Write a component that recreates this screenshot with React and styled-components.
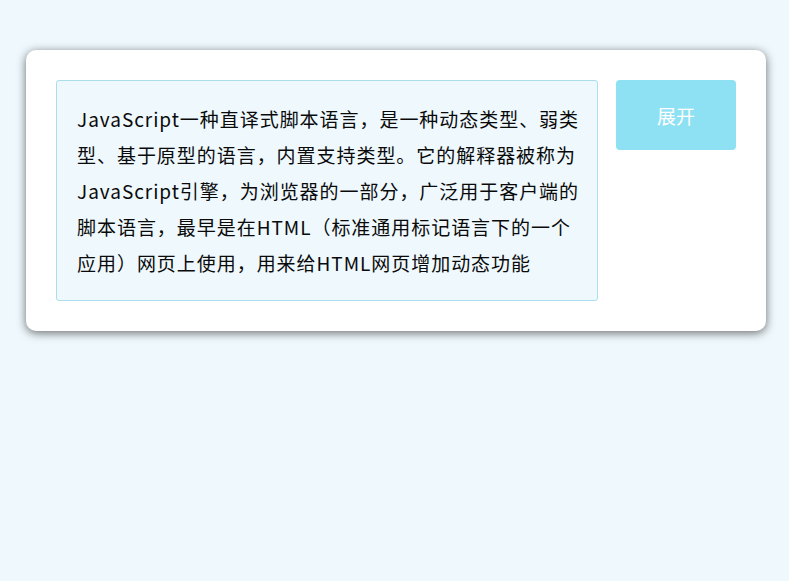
import React from "react";
import styled, { createGlobalStyle } from "styled-components";

const Global = createGlobalStyle`
  html, body { margin: 0; padding: 0; background: #eef8fd; }
  body { font-family: "Noto Sans CJK SC", "Noto Sans", sans-serif; }
`;

const Page = styled.div`
  padding: 50px 23px 0 26px;
  min-height: 581px;
  box-sizing: border-box;
`;

const Card = styled.div`
  background: #fff;
  border-radius: 10px;
  box-shadow: 0 2px 10px rgba(60, 60, 60, 0.75);
  padding: 30px;
  display: flex;
  align-items: flex-start;
  gap: 18px;
`;

const TextBox = styled.div`
  width: 542px;
  box-sizing: border-box;
  border: 1px solid #a9dfeb;
  border-radius: 3px;
  background: #eef8fd;
  padding: 20px 16px 19px 20px;
  font-size: 19px;
  line-height: 36px;
  color: #0a0a0a;
  letter-spacing: 0.96px;
`;

const Button = styled.button`
  width: 120px;
  height: 70px;
  border: none;
  border-radius: 4px;
  background: #8ee1f3;
  color: #fff;
  font-family: "Noto Sans CJK SC", sans-serif;
  font-size: 19px;
  cursor: pointer;
  padding: 0;
`;

export default function App() {
  return (
    <>
      <Global />
      <Page>
        <Card>
          <TextBox>
            JavaScript一种直译式脚本语言，是一种动态类型、弱类型、基于原型的语言，内置支持类型。它的解释器被称为JavaScript引擎，为浏览器的一部分，广泛用于客户端的脚本语言，最早是在HTML（标准通用标记语言下的一个应用）网页上使用，用来给HTML网页增加动态功能
          </TextBox>
          <Button>展开</Button>
        </Card>
      </Page>
    </>
  );
}
